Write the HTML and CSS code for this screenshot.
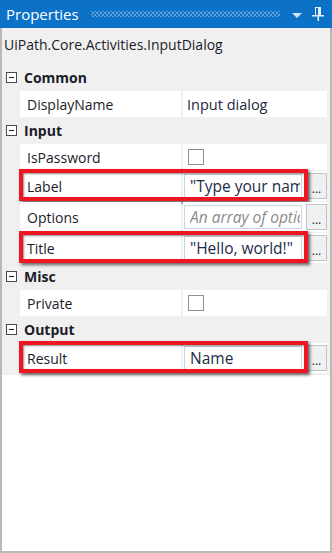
FILE: index.html
```html
<!DOCTYPE html>
<html lang="en">
<head>
    <meta charset="UTF-8">
    <title>Properties</title>
    <link rel="stylesheet" href="styles.css">
</head>
<body>
    <div class="titlebar">
        <span class="title">Properties</span>
        <span class="grip"></span>
        <span class="drop"></span>
        <svg class="pin" width="12" height="14" viewBox="0 0 12 14">
            <rect x="3.5" y="0.5" width="5" height="8" fill="none" stroke="#e4effa" stroke-width="1"/>
            <rect x="6" y="1" width="2" height="7" fill="#e4effa"/>
            <rect x="0" y="8" width="12" height="1.5" fill="#e4effa"/>
            <rect x="5.5" y="9" width="1.5" height="5" fill="#e4effa"/>
        </svg>
    </div>
    <div class="frame">
        <div class="typename">UiPath.Core.Activities.InputDialog</div>
        <div class="grid">
            <div class="cat"><span class="toggle"></span>Common</div>
            <div class="row">
                <div class="name">DisplayName</div>
                <div class="value">Input dialog</div>
            </div>

            <div class="cat"><span class="toggle"></span>Input</div>
            <div class="row">
                <div class="name">IsPassword</div>
                <div class="value"><span class="check"></span></div>
            </div>
            <div class="row tall hl">
                <div class="name">Label</div>
                <div class="value">
                    <input class="box" type="text" value="&quot;Type your name&quot;" readonly>
                    <span class="more">...</span>
                </div>
            </div>
            <div class="row tall">
                <div class="name">Options</div>
                <div class="value">
                    <input class="box" type="text" placeholder="An array of options" readonly>
                    <span class="more">...</span>
                </div>
            </div>
            <div class="row tall hl">
                <div class="name">Title</div>
                <div class="value">
                    <input class="box" type="text" value="&quot;Hello, world!&quot;" readonly>
                    <span class="more">...</span>
                </div>
            </div>

            <div class="cat"><span class="toggle"></span>Misc</div>
            <div class="row">
                <div class="name">Private</div>
                <div class="value"><span class="check"></span></div>
            </div>

            <div class="cat"><span class="toggle"></span>Output</div>
            <div class="row tall hl">
                <div class="name">Result</div>
                <div class="value">
                    <input class="box" type="text" value="Name" readonly>
                    <span class="more">...</span>
                </div>
            </div>
        </div>
    </div>
</body>
</html>
```

FILE: styles.css
```css
body {
    margin: 0;
    width: 332px;
    height: 553px;
    font-family: "Open Sans", "Noto Sans", sans-serif;
    font-size: 14px;
    color: #1b1b2a;
    background: #ffffff;
    overflow: hidden;
}
.titlebar {
    height: 28px;
    background: #0b72c7;
    display: flex;
    align-items: center;
    padding: 0 8px 0 6px;
}
.title {
    color: #ffffff;
    font-size: 15px;
}
.grip {
    flex: 1;
    height: 6px;
    margin: 0 12px 0 12px;
    background-image:
        radial-gradient(circle, #5d9fd6 0.8px, transparent 1.1px),
        radial-gradient(circle, #5d9fd6 0.8px, transparent 1.1px);
    background-size: 4px 4px;
    background-position: 0 0, 2px 2px;
}
.drop {
    width: 0;
    height: 0;
    border-left: 5px solid transparent;
    border-right: 5px solid transparent;
    border-top: 5px solid #d2e4f5;
    margin: 3px 10px 0 0;
}
.pin {
    display: block;
}
.frame {
    height: 525px;
    box-sizing: border-box;
    border: 2px solid #b9b9b9;
    border-top: 0;
    background: #ffffff;
}
.typename {
    height: 36px;
    line-height: 34px;
    padding-left: 2px;
    background: #f0f0f0;
}
.grid {
    background: #f0f0f0;
    padding: 0 3px 1px 18px;
}
.cat {
    height: 26px;
    display: flex;
    align-items: center;
    margin-left: -14px;
    font-weight: bold;
}
.toggle {
    width: 9px;
    height: 9px;
    border: 1px solid #4a4a4a;
    margin-right: 7px;
    position: relative;
    background: #ffffff;
}
.toggle::after {
    content: '';
    position: absolute;
    left: 2px;
    top: 4px;
    width: 5px;
    height: 1px;
    background: #1a1a1a;
}
.row {
    position: relative;
    display: flex;
    height: 26px;
    margin-top: 1px;
}
.row.tall {
    height: 30px;
}
.row:last-child {
    margin-bottom: 1px;
}
.name {
    width: 161px;
    padding-left: 7px;
    box-sizing: border-box;
    background: #ffffff;
    display: flex;
    align-items: center;
}
.value {
    flex: 1;
    margin-left: 2px;
    background: #ffffff;
    display: flex;
    align-items: center;
    padding-left: 4px;
    font-size: 14.5px;
    color: #1d2740;
}
.tall .value {
    padding-left: 1px;
}
.check {
    width: 14px;
    height: 14px;
    border: 1px solid #8f8f8f;
    margin-left: 1px;
    background: #ffffff;
}
.box {
    width: 118px;
    height: 24px;
    box-sizing: border-box;
    margin: 0;
    border: 1px solid #cbd5e1;
    padding: 0 1px 0 5px;
    font-family: inherit;
    font-size: 15.5px;
    color: #1c2b48;
    background: #ffffff;
    outline: none;
}
.box::placeholder {
    font-style: italic;
    color: #8a8a8a;
    opacity: 1;
}
.more {
    width: 21px;
    height: 26px;
    box-sizing: border-box;
    margin-left: auto;
    border: 1px solid #c3c3c3;
    background: #f0f0f0;
    font-size: 12px;
    line-height: 30px;
    text-align: center;
    color: #222;
}
.hl::after {
    content: '';
    position: absolute;
    left: -1px;
    top: -2px;
    right: 19px;
    bottom: 0;
    border: 4px solid #ee1620;
    box-shadow: 2px 2px 3px rgba(0, 0, 0, 0.6), inset 1px 1px 2px rgba(0, 0, 0, 0.45);
}
```
